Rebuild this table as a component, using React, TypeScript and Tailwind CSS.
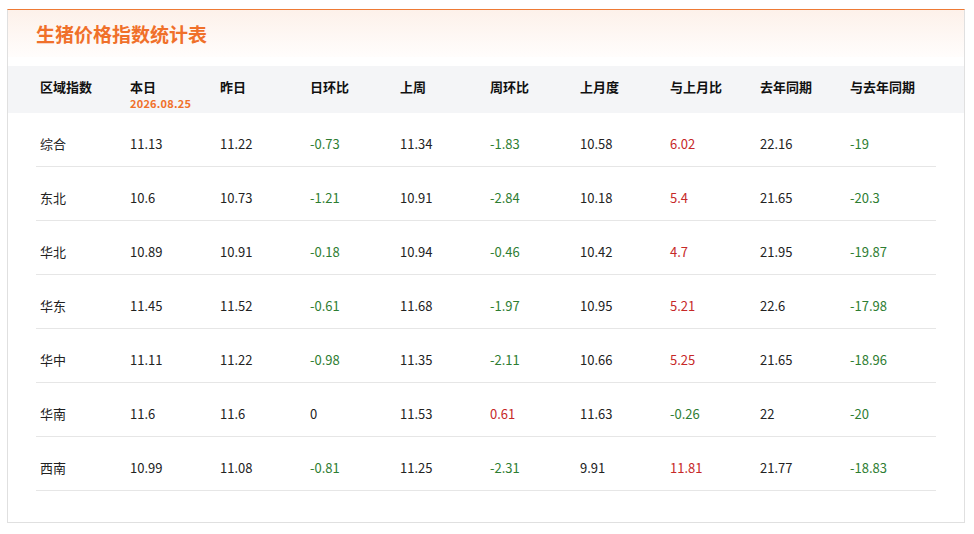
import React from 'react';

type Row = {
    name: string;
    today: string;
    yesterday: string;
    dayRatio: string;
    lastWeek: string;
    weekRatio: string;
    lastMonth: string;
    monthRatio: string;
    lastYear: string;
    yearRatio: string;
};

const rows: Row[] = [
    { name: '综合', today: '11.13', yesterday: '11.22', dayRatio: '-0.73', lastWeek: '11.34', weekRatio: '-1.83', lastMonth: '10.58', monthRatio: '6.02', lastYear: '22.16', yearRatio: '-19' },
    { name: '东北', today: '10.6', yesterday: '10.73', dayRatio: '-1.21', lastWeek: '10.91', weekRatio: '-2.84', lastMonth: '10.18', monthRatio: '5.4', lastYear: '21.65', yearRatio: '-20.3' },
    { name: '华北', today: '10.89', yesterday: '10.91', dayRatio: '-0.18', lastWeek: '10.94', weekRatio: '-0.46', lastMonth: '10.42', monthRatio: '4.7', lastYear: '21.95', yearRatio: '-19.87' },
    { name: '华东', today: '11.45', yesterday: '11.52', dayRatio: '-0.61', lastWeek: '11.68', weekRatio: '-1.97', lastMonth: '10.95', monthRatio: '5.21', lastYear: '22.6', yearRatio: '-17.98' },
    { name: '华中', today: '11.11', yesterday: '11.22', dayRatio: '-0.98', lastWeek: '11.35', weekRatio: '-2.11', lastMonth: '10.66', monthRatio: '5.25', lastYear: '21.65', yearRatio: '-18.96' },
    { name: '华南', today: '11.6', yesterday: '11.6', dayRatio: '0', lastWeek: '11.53', weekRatio: '0.61', lastMonth: '11.63', monthRatio: '-0.26', lastYear: '22', yearRatio: '-20' },
    { name: '西南', today: '10.99', yesterday: '11.08', dayRatio: '-0.81', lastWeek: '11.25', weekRatio: '-2.31', lastMonth: '9.91', monthRatio: '11.81', lastYear: '21.77', yearRatio: '-18.83' },
];

const headers = ['区域指数', '本日', '昨日', '日环比', '上周', '周环比', '上月度', '与上月比', '去年同期', '与去年同期'];

// 涨红跌绿, 0 保持黑色
const ratioColor = (v: string) => {
    const n = Number(v);
    if (n > 0) return 'text-[#c62828]';
    if (n < 0) return 'text-[#2e7d32]';
    return 'text-[#222]';
};

const Cell: React.FC<{ value: string; ratio?: boolean }> = ({ value, ratio }) => (
    <div className={`px-1 ${ratio ? ratioColor(value) : 'text-[#222]'}`}>{value}</div>
);

const App: React.FC = () => {
    return (
        <div className="w-[974px] h-[534px] bg-white pt-[9px] pl-[7px]" style={{ fontFamily: '"Noto Sans CJK SC", "Noto Sans", sans-serif' }}>
            <div className="w-[958px] h-[514px] border border-[#e0e0e0] border-t-[#ee7a35] flex flex-col">
                {/* 标题 */}
                <div className="h-[47px] bg-gradient-to-b from-[#fdf1ea] to-[#fffdfc] flex items-center pl-[28px]">
                    <h1 className="text-[19px] font-bold text-[#f0702a] leading-none">生猪价格指数统计表</h1>
                </div>

                <div className="h-[9px]" />

                {/* 表头 */}
                <div className="bg-[#f4f5f7] h-[47px] px-[28px]">
                    <div className="grid grid-cols-[repeat(10,90px)] pt-[11px] text-[13px] leading-[20px] font-bold text-[#111]">
                        {headers.map((h, idx) => (
                            <div key={h} className="px-1">
                                {h}
                                {idx === 1 && (
                                    <div className="text-[11px] leading-[12px] font-bold text-[#f0702a] tracking-[0.2px]">2026.08.25</div>
                                )}
                            </div>
                        ))}
                    </div>
                </div>

                {/* 数据 */}
                <div className="px-[28px] text-[13px] leading-[20px]">
                    {rows.map(r => (
                        <div key={r.name} className="grid grid-cols-[repeat(10,90px)] h-[54px] pt-[21px] border-b border-[#e6e6e6]">
                            <Cell value={r.name} />
                            <Cell value={r.today} />
                            <Cell value={r.yesterday} />
                            <Cell value={r.dayRatio} ratio />
                            <Cell value={r.lastWeek} />
                            <Cell value={r.weekRatio} ratio />
                            <Cell value={r.lastMonth} />
                            <Cell value={r.monthRatio} ratio />
                            <Cell value={r.lastYear} />
                            <Cell value={r.yearRatio} ratio />
                        </div>
                    ))}
                </div>
            </div>
        </div>
    );
};

export default App;
